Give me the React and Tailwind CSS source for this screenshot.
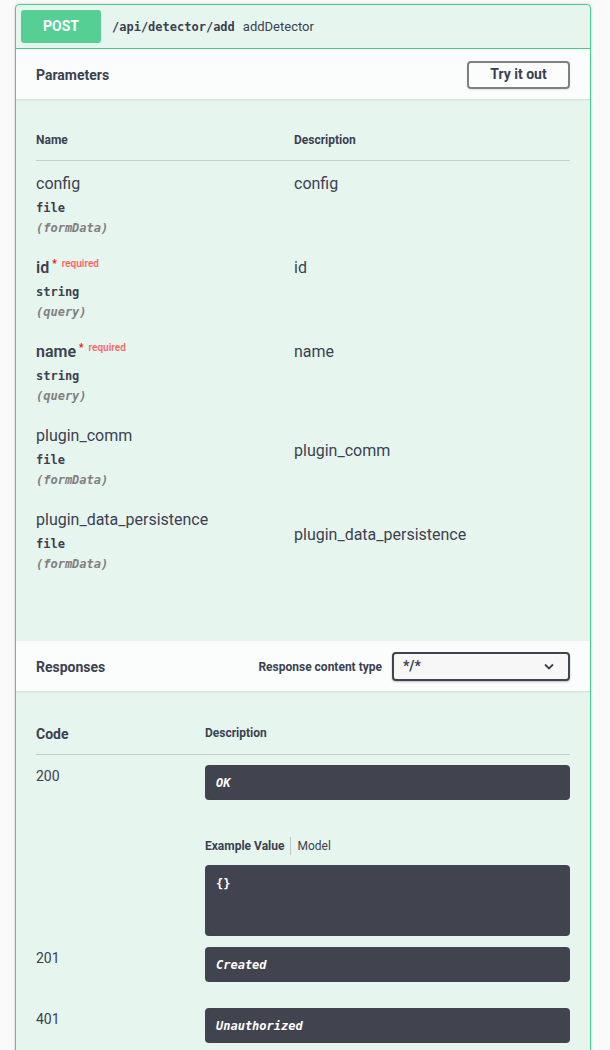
import React from 'react';

const SANS = "font-['Roboto','Open_Sans',sans-serif]";
const MONO = "font-['DejaVu_Sans_Mono','Liberation_Mono',monospace]";

const params = [
  { name: 'config', type: 'file', where: '(formData)', desc: 'config', required: false, descOffset: false },
  { name: 'id', type: 'string', where: '(query)', desc: 'id', required: true, descOffset: false },
  { name: 'name', type: 'string', where: '(query)', desc: 'name', required: true, descOffset: false },
  { name: 'plugin_comm', type: 'file', where: '(formData)', desc: 'plugin_comm', required: false, descOffset: true },
  { name: 'plugin_data_persistence', type: 'file', where: '(formData)', desc: 'plugin_data_persistence', required: false, descOffset: true },
];

const ParamRow = ({ p }) => (
  <div className="flex pt-[11px] pb-[9px]">
    <div className="w-[258px] shrink-0">
      <div className={`h-[24px] leading-[24px] text-[16px] ${p.required ? 'font-semibold' : ''}`}>
        {p.name}
        {p.required && (
          <>
            <span className="relative -top-[6px] ml-[3px] text-[10px] text-[#ff0000]">*</span>
            <span className="relative -top-[6px] ml-[5px] text-[10px] text-[#ff0000]/60">required</span>
          </>
        )}
      </div>
      <div className={`h-[24px] leading-[24px] text-[12px] font-semibold ${MONO}`}>{p.type}</div>
      <div className={`h-[16px] leading-[16px] text-[12px] italic font-semibold text-[#808080] ${MONO}`}>{p.where}</div>
    </div>
    <div className={`flex-1 text-[16px] leading-[24px] ${p.descOffset ? 'pt-[15px]' : ''}`}>{p.desc}</div>
  </div>
);

const DarkBox = ({ children, className = '' }) => (
  <div className={`rounded-[4px] bg-[#41444e] px-[11px] text-white ${className}`}>{children}</div>
);

export default function App() {
  return (
    <div className={`min-h-[1050px] bg-[#fafafa] pt-[4px] pl-[15px] text-[#3b4151] ${SANS}`}>
      <div className="w-[576px] overflow-hidden rounded-t-[4px] border border-[#49cc90] bg-[#49cc90]/10 shadow-[0_0_3px_rgba(0,0,0,0.19)]">
        {/* Summary */}
        <div className="flex items-center border-b border-[#49cc90] p-[5px]">
          <div className="flex h-[33px] w-[80px] items-center justify-center rounded-[3px] bg-[#55cf94] text-[14px] font-bold text-white">
            POST
          </div>
          <span className={`ml-[11px] text-[12px] font-semibold ${MONO}`}>/api/detector/add</span>
          <span className="ml-[8px] text-[13px]">addDetector</span>
        </div>

        {/* Parameters header */}
        <div className="flex h-[50px] items-center justify-between bg-white/80 px-[20px] pt-[1px] shadow-[0_1px_2px_rgba(0,0,0,0.1)]">
          <h4 className="pt-[1px] text-[14px] font-bold">Parameters</h4>
          <button className="h-[28px] w-[103px] rounded-[4px] border-2 border-[#808080] text-[14px] font-bold shadow-[0_1px_2px_rgba(0,0,0,0.1)]">
            Try it out
          </button>
        </div>

        {/* Parameters table */}
        <div className="px-[20px] pt-[20px] pb-[60px]">
          <div className="flex h-[42px] items-center border-b border-[#3b4151]/20 text-[12px] font-bold">
            <div className="w-[258px]">Name</div>
            <div>Description</div>
          </div>
          {params.map(p => <ParamRow key={p.name} p={p} />)}
        </div>

        {/* Responses header */}
        <div className="flex h-[50px] items-center justify-between bg-white/80 px-[20px] pt-[1px] shadow-[0_1px_2px_rgba(0,0,0,0.1)]">
          <h4 className="pt-[1px] text-[14px] font-bold">Responses</h4>
          <div className="flex items-center">
            <span className="mr-[10px] text-[12px] font-bold">Response content type</span>
            <div className="flex h-[29px] w-[178px] items-center justify-between rounded-[4px] border-2 border-[#41444e] bg-[#f7f7f7] pl-[9px] pr-[14px] shadow-[0_1px_2px_rgba(0,0,0,0.25)]">
              <span className="text-[14px] font-bold">*/*</span>
              <svg width="10" height="7" viewBox="0 0 10 7" fill="none">
                <polyline points="1,1.5 5,5.5 9,1.5" stroke="#3b4151" strokeWidth="1.8" />
              </svg>
            </div>
          </div>
        </div>

        {/* Responses table */}
        <div className="px-[20px] pt-[20px] pb-[10px]">
          <div className="flex h-[44px] items-center border-b border-[#3b4151]/20 font-bold">
            <div className="w-[169px] pt-[3px] text-[14px]">Code</div>
            <div className="text-[12px]">Description</div>
          </div>

          <div className="flex pt-[10px]">
            <div className="w-[169px] pt-[1px] text-[14px] leading-[20px]">200</div>
            <div className="flex-1">
              <DarkBox className={`flex h-[35px] items-center text-[12px] italic font-bold ${MONO}`}>OK</DarkBox>
              <div className="mt-[36px] flex h-[20px] items-center text-[12px]">
                <span className="font-bold">Example Value</span>
                <span className="mx-[6px] h-[18px] w-px bg-[#3b4151]/25" />
                <span>Model</span>
              </div>
              <DarkBox className={`mt-[9px] h-[71px] pt-[10px] text-[12px] font-bold leading-[18px] ${MONO}`}>{'{}'}</DarkBox>
            </div>
          </div>

          <div className="mt-[11px] flex">
            <div className="w-[169px] pt-[1px] text-[14px] leading-[20px]">201</div>
            <div className="flex-1">
              <DarkBox className={`flex h-[35px] items-center text-[12px] italic font-bold ${MONO}`}>Created</DarkBox>
            </div>
          </div>

          <div className="mt-[26px] flex">
            <div className="w-[169px] pt-[1px] text-[14px] leading-[20px]">401</div>
            <div className="flex-1">
              <DarkBox className={`flex h-[35px] items-center text-[12px] italic font-bold ${MONO}`}>Unauthorized</DarkBox>
            </div>
          </div>
        </div>
      </div>
    </div>
  );
}
